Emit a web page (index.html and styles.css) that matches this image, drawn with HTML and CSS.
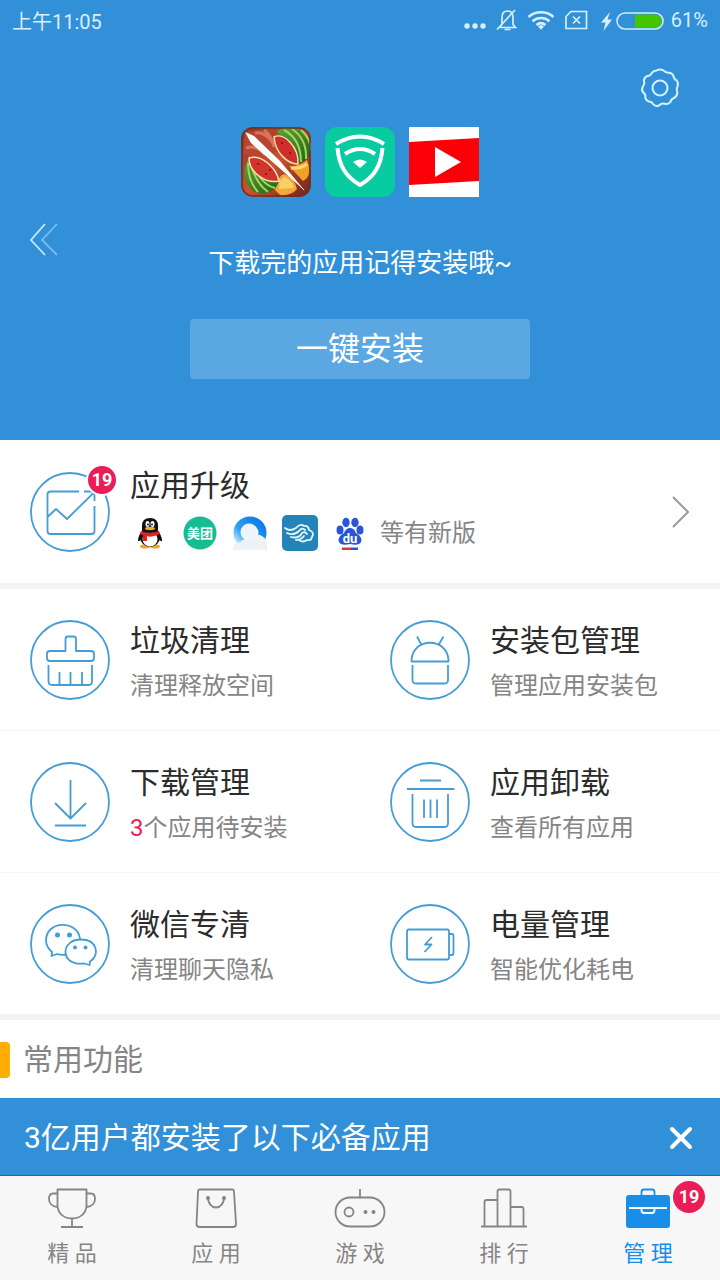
FILE: index.html
```html
<!DOCTYPE html>
<html lang="zh-CN">
<head>
<meta charset="utf-8">
<meta name="viewport" content="width=device-width, initial-scale=1">
<title>管理</title>
<link rel="stylesheet" href="styles.css">
</head>
<body>
<div class="app">
  <header class="hero">
    <div class="status">
      <span>上午11:05</span>
      <div class="status-icons">
        <svg width="136" height="30" viewBox="0 0 136 30" fill="none" stroke="#d9effc" stroke-width="1.7">
          <g fill="#d9effc" stroke="none"><circle cx="6" cy="21" r="2.7"/><circle cx="14" cy="21" r="2.7"/><circle cx="22" cy="21" r="2.7"/></g>
          <path d="M38.500 22.500H54.500L52 19.500V12.500C52 8 49.500 6 46.500 6S41 8 41 12.500V19.500L38.500 22.500M43.500 24.500H49.500M36 24.500L54 5"/>
          <g stroke-width="2.500"><path d="M67.500 12C74.500 5.800 85.500 5.800 92.500 12M71.500 16.200C76.500 12 83.500 12 88.500 16.200M75.500 20C78.500 17.500 81.500 17.500 84.500 20"/></g>
          <path d="M77 21.500Q80 19 83 21.500L80 24.800Z" fill="#d9effc" stroke="none"/>
          <path d="M110 6.500H125.500V23.500H105V11.500ZM112 11.500L119 18.500M119 11.500L112 18.500"/>
        </svg>
        <svg width="66" height="30" viewBox="0 0 66 30">
          <path d="M9 7L0 17.500H4.500L2.500 26L11 14.500H6.500Z" fill="#d9effc"/>
          <rect x="16" y="8" width="46" height="16" rx="8" fill="none" stroke="#cfeaff" stroke-width="1.600"/>
          <path d="M34 9.500H55Q60.500 10 60.500 16T55 22.500H34Z" fill="#43c500"/>
        </svg>
        <span>61%</span>
      </div>
    </div>
    <div class="toolbar">
      <button class="plain" type="button" aria-label="设置">
        <svg width="40" height="40" viewBox="-20 -20 40 40" fill="none" stroke="#d5f0ff" stroke-width="2">
          <path d="M-3.300-17.600Q0-19.400 3.300-17.600Q6-14.800 9-15.200Q12.500-15 13.500-11.800Q13.800-8.800 16.700-7.500Q19-4.500 17.500-1.700Q15.800 1.500 17.300 4.600Q17.300 8.500 14 10Q11.100 10.900 10.500 13.800Q8 16.700 4.700 15.800Q1.500 14.800-1 17.500Q-4.700 18.800-7 16.200Q-8.200 13.500-11.200 13.500Q-14.700 12.300-14.700 9Q-14.200 6-17 4.400Q-19 1.200-17-1.800Q-15-4.200-16.100-7.200Q-16-10.800-12.700-12Q-9.500-12-8.300-14.800Q-6-17.800-3.300-17.600Z"/>
          <circle r="7.500"/>
        </svg>
      </button>
    </div>
    <div class="stage">
      <button class="plain back" type="button" aria-label="返回">
        <svg width="30" height="34" viewBox="0 0 30 34" fill="none" stroke-width="1.800"><path d="M15 1L1 17L15 32" stroke="#c9ebff"/><path d="M27 1L12 17L27 32" stroke="#79bbed"/></svg>
      </button>
      <div class="install">
        <div class="installed-apps">
          <svg width="70" height="70" viewBox="0 0 70 70">
            <defs>
              <clipPath id="tile"><rect width="70" height="70" rx="12"/></clipPath>
              <linearGradient id="wood" x2="1" y2="1"><stop stop-color="#8e3020"/><stop offset=".5" stop-color="#c95330"/><stop offset="1" stop-color="#702019"/></linearGradient>
              <linearGradient id="rind" x2="1" y2="1"><stop stop-color="#5fa336"/><stop offset="1" stop-color="#1f6416"/></linearGradient>
            </defs>
            <g clip-path="url(#tile)">
              <rect width="70" height="70" fill="url(#wood)"/>
              <path d="M4 5L28 2L38 24L17 31L2 27Z" fill="#b8452f"/><path d="M14 6Q25 4 33 18M5 21Q15 17 24 28M23 3Q31 9 33 20" fill="none" stroke="#d9735a" stroke-width="3"/>
              <path d="M36 4C48-4 66 1 69 15C72 28 65 36 56 37Z" fill="url(#rind)"/>
              <path d="M43 3Q60 12 60 35M51 2Q66 12 65 32M60 3Q70 12 70 24" fill="none" stroke="#a6d05a" stroke-width="2"/>
              <path d="M33 10C43 5 58 20 57 37C46 37 34 25 33 10Z" fill="#cf2f2a" stroke="#f2dfae" stroke-width="1.500"/>
              <path d="M48 39Q57 40 66 33Q72 49 62 54Z" fill="#f0a12c"/><path d="M50 41Q60 42 66 37" fill="none" stroke="#ffd771" stroke-width="3"/>
              <path d="M34 63Q37 48 43 47Q53 50 56 62Q50 69 39 68Z" fill="#f2a93a"/><path d="M38 62Q38 51 44 50Q51 54 53 61Z" fill="#f9cf68"/>
              <path d="M8 31C1 42 2 58 14 65C25 69 35 64 38 54Z" fill="url(#rind)"/>
              <path d="M7 36Q7 54 17 65M11 41Q16 57 27 65M18 49Q25 59 34 61" fill="none" stroke="#a9d55f" stroke-width="2"/>
              <path d="M8 31C20 27 35 40 38 54C24 57 8 45 8 31Z" fill="#d0342c" stroke="#f5e5bd" stroke-width="1.500"/>
              <path d="M4 5L13 9L39 34L64 64L35 38L10 16Z" fill="#fff"/><path d="M5 6L63 63" stroke="#e7f7df" fill="none"/>
              <g fill="#6b1717"><circle cx="17" cy="37" r="1"/><circle cx="25" cy="47" r="1"/><circle cx="29" cy="43" r="1"/><circle cx="41" cy="16" r="1"/><circle cx="49" cy="26" r="1"/></g>
            </g>
            <rect x="1" y="1" width="68" height="68" rx="11" fill="none" stroke="#6b3325" stroke-width="1.500"/>
          </svg>
          <svg width="70" height="70" viewBox="0 0 70 70">
            <rect width="70" height="70" rx="12" fill="#08cba0"/>
            <path d="M11 17Q35 2 59 17M20 27Q35 17 50 27" fill="none" stroke="#fff" stroke-width="4"/>
            <path d="M12.500 21C14 39 21 50 35 58C49 50 56 39 57.500 21" fill="none" stroke="#fff" stroke-width="4" stroke-linejoin="round"/>
            <path d="M28 35Q35 30 42 35L35 41Z" fill="#fff"/>
          </svg>
          <svg width="70" height="70" viewBox="0 0 70 70"><path fill="#fff" d="M0 0H70V70H0Z"/><path fill="#fb0007" d="M0 15L70 11V54L0 58Z"/><path fill="#fff" d="M26 20V50L52 35Z"/></svg>
        </div>
        <p class="install-note">下载完的应用记得安装哦~</p>
        <button class="install-button" type="button">一键安装</button>
      </div>
    </div>
  </header>

  <main>
    <a class="upgrade" href="#upgrade">
      <span class="icon-wrap">
        <svg class="round-icon" viewBox="0 0 80 80"><circle cx="40" cy="40" r="39"/><path d="M49 19.500H20.500Q17.500 19.500 17.500 22.500V59Q17.500 62 20.500 62H61.500Q64.500 62 64.500 59V34M17.500 45L26 37L37 47L64.500 20V29M54 19.500H64.500" /></svg>
        <span class="badge">19</span>
      </span>
      <span class="upgrade-body">
        <span class="title">应用升级</span>
        <span class="updates">
          <svg class="mini" viewBox="0 0 36 36"><ellipse cx="13" cy="31.500" rx="5" ry="2" fill="#f3a91d"/><ellipse cx="23" cy="31.500" rx="5" ry="2" fill="#f3a91d"/><path d="M10 16Q6 21 6 26Q8 27 10 23M26 16Q30 21 30 26Q28 27 26 23" fill="#111"/><ellipse cx="18" cy="22" rx="10" ry="10" fill="#111"/><ellipse cx="18" cy="24" rx="7.500" ry="7.500" fill="#fff"/><path d="M10 15V11Q10 3 18 3T26 11V15Q26 18 18 18T10 15Z" fill="#111"/><ellipse cx="15.500" cy="9" rx="2" ry="3" fill="#fff"/><ellipse cx="20.500" cy="9" rx="2" ry="3" fill="#fff"/><circle cx="16" cy="9.500" r=".9"/><circle cx="20" cy="9.500" r=".9"/><ellipse cx="18" cy="13.500" rx="5" ry="1.700" fill="#f5ad20"/><path d="M9 16Q18 20 27 16L28 19Q18 23 15 21V26H11V20L8 19Z" fill="#e52024"/></svg>
          <svg class="mini" viewBox="0 0 36 36"><circle cx="18" cy="18" r="16.500" fill="#16bd92"/><text class="mini-text" x="18" y="23" text-anchor="middle">美团</text></svg>
          <svg class="mini" viewBox="0 0 36 36"><defs><linearGradient id="ring" x1="1" x2="0" y2="1"><stop stop-color="#0877e8"/><stop offset=".65" stop-color="#31a2f2"/><stop offset="1" stop-color="#d6efff"/></linearGradient></defs><circle cx="18" cy="18" r="12.500" fill="#fff" stroke="url(#ring)" stroke-width="8"/><path d="M1 35Q1 28 8 27Q12 22 18 26Q23 17 30 21Q36 24 35 35Z" fill="#edf2f6"/><circle cx="17" cy="17" r="8.500" fill="#edf5fb"/></svg>
          <svg class="mini" viewBox="0 0 36 36"><rect width="36" height="36" rx="5" fill="#2484b9"/><g fill="none" stroke="#e0f7fc" stroke-width="1.800" stroke-linecap="round" stroke-linejoin="round"><path d="M3 13Q8 17 14 13Q18 8 22 11Q26 10 27 15Q33 17 30 22Q29 26 25 25Q21 28 17 25"/><path d="M5 18Q12 21 17 16Q20 12 23 15M9 22Q17 24 20 18Q23 16 25 19M14 25Q19 25 22 21"/></g></svg>
          <svg class="mini" viewBox="0 0 36 36" fill="#2856d8"><ellipse cx="8" cy="15" rx="3.500" ry="4.500"/><ellipse cx="14" cy="7.500" rx="3.700" ry="4.700"/><ellipse cx="23" cy="7.500" rx="3.700" ry="4.700"/><ellipse cx="28" cy="15" rx="3.500" ry="4.500"/><path d="M18 13Q22 13 24 18Q31 22 29 27Q27 31 18 29Q9 31 7 27Q5 22 12 18Q14 13 18 13Z"/><text class="mini-text" x="18" y="28" text-anchor="middle">du</text><path d="M10 32.500H19V35H10Z" fill="#e6332b"/><path d="M19 32.500H26V35H19Z"/></svg>
          <span class="subtitle">等有新版</span>
        </span>
      </span>
      <svg class="chevron" width="18" height="34" viewBox="0 0 18 34" fill="none" stroke="#999" stroke-width="2"><path d="M1 2L16 17L1 32"/></svg>
    </a>

    <nav class="features" aria-label="管理工具">
      <a class="feature" href="#clean">
        <svg class="round-icon" viewBox="0 0 80 80"><circle cx="40" cy="40" r="39"/><path d="M35.500 31V19Q35.500 16.500 38 16.500H43.500Q46 16.500 46 19V31H61Q64 31 64 33.500V38Q64 41 61 41H20Q17 41 17 38V33.500Q17 31 20 31ZM18.500 45V61Q18.500 65 22 65H59Q62 65 62 61V45M29.500 52V64M40.500 52V64M52 52V64"/></svg>
        <span class="feature-text"><span class="title">垃圾清理</span><span class="subtitle">清理释放空间</span></span>
      </a>
      <a class="feature" href="#packages">
        <svg class="round-icon" viewBox="0 0 80 80"><circle cx="40" cy="40" r="39"/><path d="M21.500 41.500V40C23 17 57 17 58.500 40V41.500ZM27 16.500L31.500 25M53.500 16.500L48.500 25M22.500 45V60Q22.500 63.500 26 63.500H54.500Q58 63.500 58 60V45"/></svg>
        <span class="feature-text"><span class="title">安装包管理</span><span class="subtitle">管理应用安装包</span></span>
      </a>
      <a class="feature" href="#downloads">
        <svg class="round-icon" viewBox="0 0 80 80"><circle cx="40" cy="40" r="39"/><path d="M40.500 18V56M25 41L40.500 56.500L56 41M25 63.500H56"/></svg>
        <span class="feature-text"><span class="title">下载管理</span><span class="subtitle"><em>3</em>个应用待安装</span></span>
      </a>
      <a class="feature" href="#uninstall">
        <svg class="round-icon" viewBox="0 0 80 80"><circle cx="40" cy="40" r="39"/><path d="M30 18.500H51M17 27H64.500M22.500 32V61Q22.500 65 26 65H54.500Q58 65 58 61V32M34 37.500V56M40.500 37.500V56M47 37.500V56"/></svg>
        <span class="feature-text"><span class="title">应用卸载</span><span class="subtitle">查看所有应用</span></span>
      </a>
      <a class="feature" href="#wechat">
        <svg class="round-icon" viewBox="0 0 80 80"><circle cx="40" cy="40" r="39"/><path d="M50 35C48 16 16 16 16 36.500C16 42 18.500 45 22 48L21.500 52L27 50C30 51 34 51 37 50.500"/><path d="M50 35.500C68 35 70 52 60 57.500L59.500 61L54 59.500C41 61 35 54 35.500 47C36 40 43 35.500 50 35.500Z"/><g class="dots"><circle cx="27.500" cy="31" r="2.500"/><circle cx="39.500" cy="31" r="2.500"/><circle cx="45" cy="43.500" r="2"/><circle cx="55.500" cy="43.500" r="2"/></g></svg>
        <span class="feature-text"><span class="title">微信专清</span><span class="subtitle">清理聊天隐私</span></span>
      </a>
      <a class="feature" href="#battery">
        <svg class="round-icon" viewBox="0 0 80 80"><circle cx="40" cy="40" r="39"/><rect x="17" y="25.500" width="42" height="30" rx="2"/><path d="M59 30H62Q63.500 30 63.500 32V49Q63.500 51 62 51H59M42 33L35 40.500H41.500L34.500 48"/></svg>
        <span class="feature-text"><span class="title">电量管理</span><span class="subtitle">智能优化耗电</span></span>
      </a>
    </nav>
    <h2 class="section-title">常用功能</h2>
  </main>

  <footer class="bottom">
    <div class="promo">
      <span>3亿用户都安装了以下必备应用</span>
      <button class="plain" type="button" aria-label="关闭"><svg width="24" height="24" viewBox="0 0 24 24" stroke="#fff" stroke-width="4" stroke-linecap="round"><path d="M3 3L21 21M21 3L3 21"/></svg></button>
    </div>
    <nav class="tabs" aria-label="主导航">
      <a class="tab" href="#featured"><svg class="tab-icon" viewBox="0 0 48 44"><path d="M9.500 3.500H38.500V19C38.500 37 9.500 37 9.500 19ZM9.500 7.500H5Q1 7.500 1 13C1 17 4 20.500 9.500 21M38.500 7.500H43Q47 7.500 47 13C47 17 44 20.500 38.500 21M24 32.500V41M13 41H35"/></svg>精 品</a>
      <a class="tab" href="#apps"><svg class="tab-icon" viewBox="0 0 48 44"><path d="M8 3.500H40Q42 3.500 42 5.500L44 38Q44 41 41 41H7.500Q4.500 41 4.500 38L6 5.500Q6 3.500 8 3.500ZM16 11C16 25 32 25 32 11"/><g class="tab-dots"><circle cx="16" cy="12" r="2"/><circle cx="32" cy="12" r="2"/></g></svg>应 用</a>
      <a class="tab" href="#games"><svg class="tab-icon" viewBox="0 0 48 44"><rect x="-.5" y="11.500" width="49" height="29" rx="14.500"/><circle cx="13" cy="26" r="4.500"/><path d="M24 3V11"/><g class="tab-dots"><circle cx="29.500" cy="26" r="2"/><circle cx="37.500" cy="26" r="2"/></g></svg>游 戏</a>
      <a class="tab" href="#ranking"><svg class="tab-icon" viewBox="0 0 48 44"><path d="M1 40.500H47M4.500 40V16Q4.500 14 6.500 14H17.500M17.500 40V5.500Q17.500 3.500 19.500 3.500H28.500Q30.500 3.500 30.500 5.500V40M30.500 21H41.500Q43.500 21 43.500 23V40"/></svg>排 行</a>
      <a class="tab active" href="#manage" aria-current="page"><span class="icon-wrap"><svg class="tab-icon" viewBox="0 0 48 44"><rect x="2" y="9" width="44" height="33" rx="3" fill="#188ee9" stroke="none"/><path d="M17.500 9V6Q17.500 3.500 20 3.500H28Q30.500 3.500 30.500 6V9"/><path d="M5 22H43M17.500 22V24Q17.500 27 20 27H28Q30.500 27 30.500 24V22" stroke="#fff"/></svg><span class="badge">19</span></span>管 理</a>
    </nav>
  </footer>
</div>
</body>
</html>
```

FILE: styles.css
```css
* { box-sizing: border-box; }

body {
  margin: 0;
  background: #fff;
  color: #2b2b2b;
  font-family: Roboto, "Noto Sans CJK SC", sans-serif;
  font-weight: 400;
}

a { color: inherit; text-decoration: none; }

svg { display: block; flex: none; overflow: visible; }

.app { display: flex; flex-direction: column; min-height: 100vh; }

.plain { display: block; padding: 0; border: 0; background: none; cursor: pointer; }

.hero { padding-bottom: 61px; background: #3190d8; color: #fff; }

.status {
  display: flex;
  justify-content: space-between;
  align-items: center;
  height: 40px;
  padding: 0 12px;
  color: #d9effc;
  font-size: 20px;
}

.status-icons { display: flex; align-items: center; gap: 4px; }

.toolbar { display: flex; justify-content: flex-end; padding: 28px 40px 19px; }

.stage { display: grid; grid-template-columns: 1fr auto 1fr; align-items: start; }

.back { justify-self: start; margin: 96px 0 0 30px; }

.install { width: 340px; text-align: center; }

.installed-apps { display: flex; justify-content: center; gap: 14px; }

.install-note { margin: 46px 0 36px; font-size: 26px; line-height: 40px; }

.install-button {
  width: 100%;
  padding: 1px 0 0;
  border: 0;
  border-radius: 4px;
  background: #5aa7e2;
  color: #fff;
  font: inherit;
  font-size: 32px;
  line-height: 59px;
}

.title { display: block; font-size: 30px; line-height: 46px; }

.subtitle { display: block; color: #858585; font-size: 24px; line-height: 44px; }

.subtitle em { color: #e91e55; font-style: normal; }

.round-icon {
  width: 80px;
  height: 80px;
  fill: none;
  stroke: #459dd6;
  stroke-width: 1.8;
  stroke-linejoin: round;
}

.dots { fill: #459dd6; stroke: none; }

.icon-wrap { position: relative; display: block; }

.badge {
  position: absolute;
  top: -8px;
  right: -8px;
  width: 32px;
  height: 32px;
  border: 2px solid #fff;
  border-radius: 50%;
  background: #eb1d57;
  color: #fff;
  font-size: 18px;
  font-weight: 700;
  line-height: 28px;
  text-align: center;
}

.upgrade {
  display: flex;
  align-items: center;
  gap: 20px;
  padding: 23px 30px 22px;
  border-bottom: 6px solid #f3f3f3;
}

.upgrade-body { flex: 1; padding-bottom: 6px; }

.updates { display: flex; align-items: center; gap: 14px; padding-top: 2px; }

.updates .subtitle { margin-left: -2px; }

.mini { width: 36px; height: 36px; }

.mini:first-child { margin-left: 2px; }

.mini-text { fill: #fff; font-size: 13px; font-weight: 700; }

.features {
  display: grid;
  grid-template-columns: 1fr 1fr;
  border-bottom: 5px solid #f3f3f3;
}

.feature {
  display: flex;
  align-items: center;
  gap: 20px;
  padding: 22px 0 22px 30px;
  border-bottom: 1px solid #f5f5f5;
}

.feature-text { padding-top: 7px; }

.section-title {
  display: flex;
  align-items: center;
  gap: 13px;
  margin: 0;
  padding: 17px 0 15px;
  color: #858585;
  font-size: 30px;
  font-weight: 400;
  line-height: 46px;
}

.section-title::before {
  width: 10px;
  height: 36px;
  border-radius: 0 4px 4px 0;
  background: #ffad00;
  content: "";
}

.bottom { margin-top: auto; }

.promo {
  display: flex;
  justify-content: space-between;
  align-items: center;
  padding: 17px 27px 14px 24px;
  border-bottom: 1px solid #1c67a4;
  background: #3190d8;
  color: #fff;
  font-size: 30px;
  line-height: 46px;
}

.tabs {
  display: grid;
  grid-template-columns: repeat(5, 1fr);
  padding: 10px 0;
  background: #f7f7f7;
}

.tab {
  display: flex;
  flex-direction: column;
  align-items: center;
  gap: 8px;
  color: #858585;
  font-size: 22px;
  line-height: 32px;
}

.tab-icon {
  width: 48px;
  height: 44px;
  fill: none;
  stroke: currentColor;
  stroke-width: 1.8;
  stroke-linejoin: round;
}

.tab-dots { fill: currentColor; stroke: none; }

.tab .badge { top: -5px; right: -33px; border: 0; line-height: 32px; }

.active { color: #188ee9; }
```
